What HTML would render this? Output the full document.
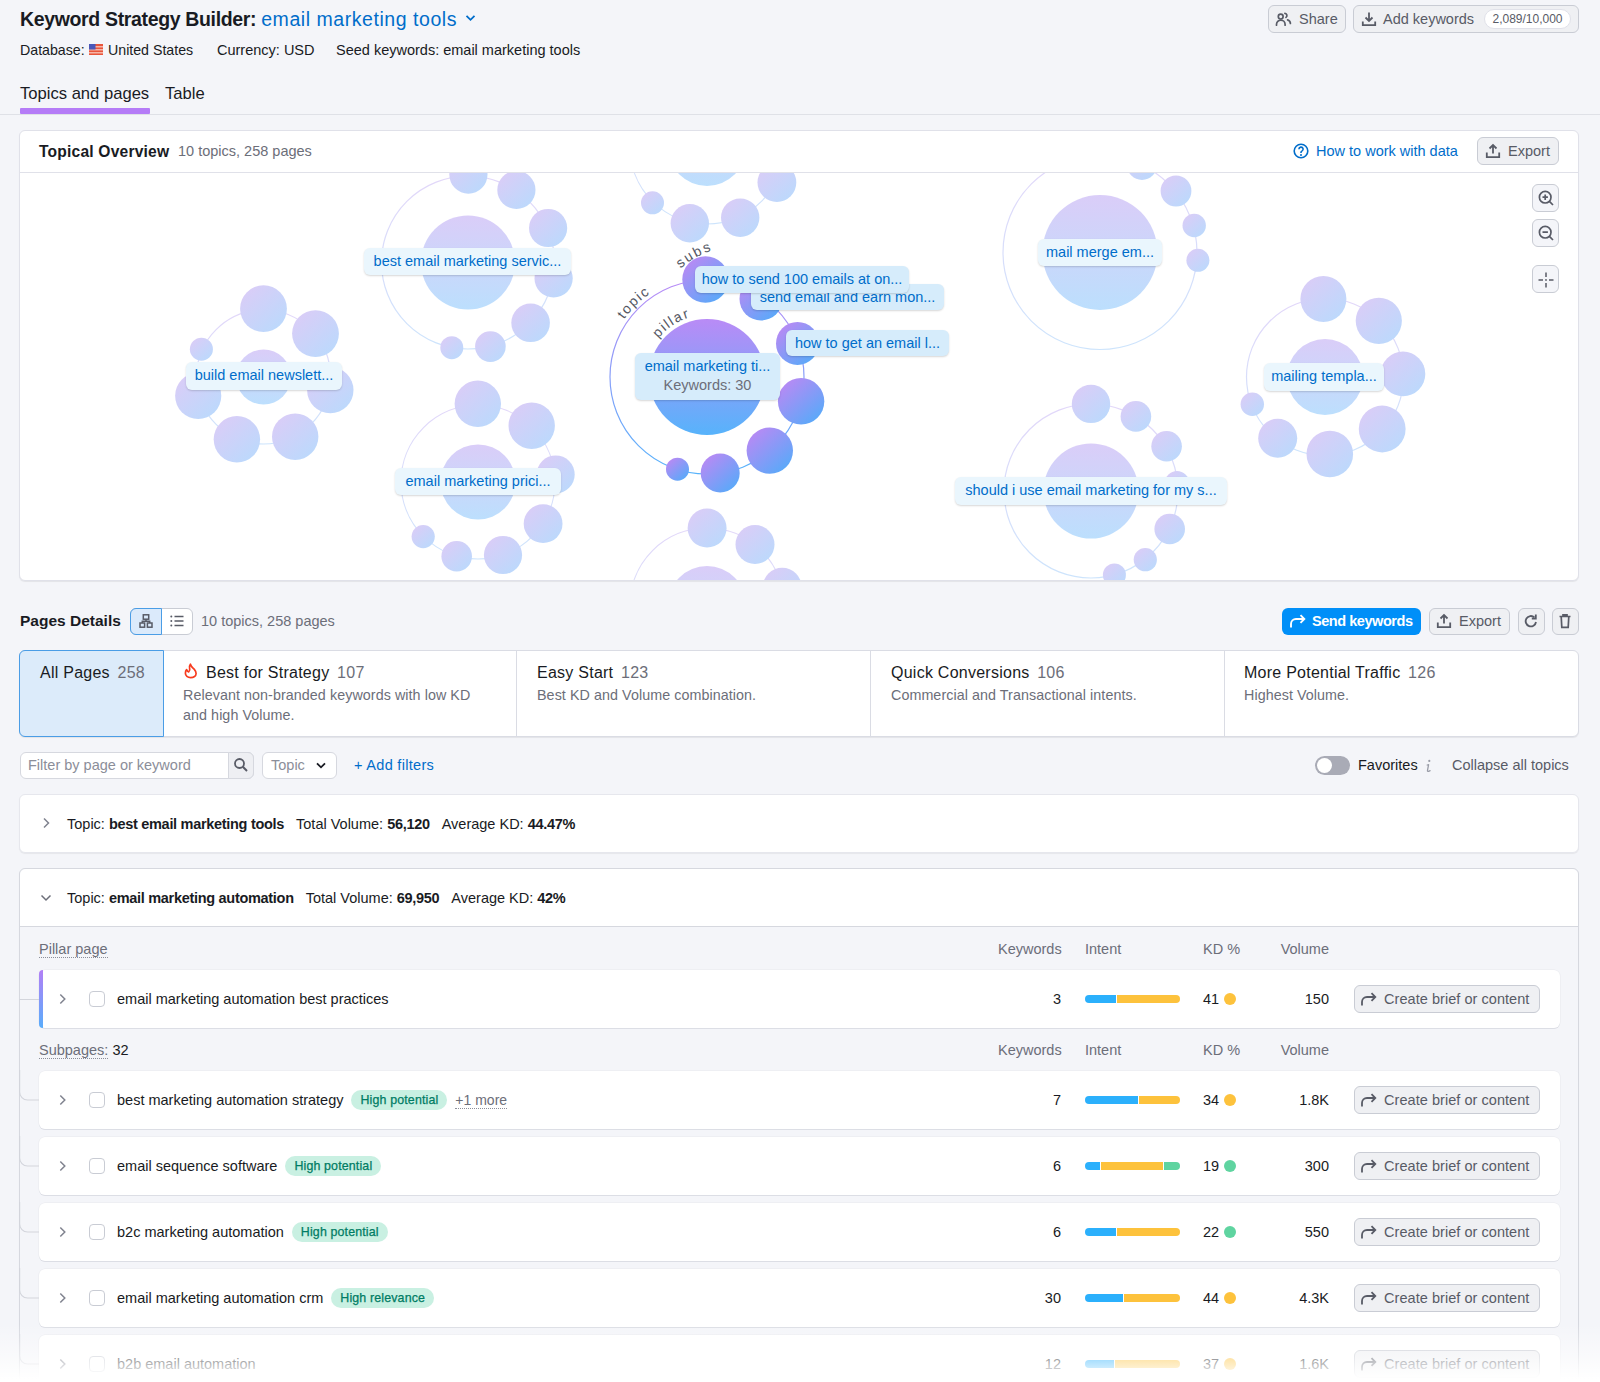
<!DOCTYPE html>
<html><head><meta charset="utf-8">
<style>
*{box-sizing:border-box;margin:0;padding:0}
html,body{width:1600px;height:1382px;overflow:hidden}
body{background:#f4f5f9;font-family:"Liberation Sans",sans-serif;color:#191b23;font-size:14.5px;position:relative}
.a{position:absolute;white-space:nowrap}
.g{color:#6c6e79}
.blue{color:#006dca}
.btn{position:absolute;border:1px solid #c9ccd4;background:#eff0f3;border-radius:6px;color:#585b66}
.card{position:absolute;background:#fff;border:1px solid #e0e1e9;border-radius:6px;box-shadow:0 1px 1px rgba(0,0,0,0.07)}
.sep{position:absolute;height:1px;background:#e0e1e9}
svg{position:absolute;overflow:visible}
.row{position:absolute;left:39px;width:1521px;height:58px;background:#fff;border-radius:6px;box-shadow:0 1px 0 #dcdee5, 0 0 0 0.5px #e8e9ee}
.badge{display:inline-block;margin-left:8px;padding:0 9px;height:20px;line-height:20px;border-radius:10px;background:#c9f0e2;color:#007c64;font-size:12.4px;letter-spacing:0.15px;-webkit-text-stroke:0.25px #007c64;vertical-align:1px}
.dot{border-bottom:1px dotted #8b8e99}
.lbl{position:absolute;white-space:nowrap;border-radius:6px;box-shadow:0 1px 2px rgba(0,0,0,0.16);color:#006dca;font-size:14.5px;line-height:27px;text-align:center}
</style></head><body>

<!-- HEADER -->
<div class="a" style="left:20px;top:7px;font-size:19.5px;line-height:24px;font-weight:700;letter-spacing:-0.35px">Keyword Strategy Builder: <span class="blue" style="font-weight:400;letter-spacing:0.55px">email marketing tools</span></div>
<svg style="left:465px;top:14px" width="11" height="8" viewBox="0 0 11 8"><path d="M1.5 1.8 L5.5 5.8 L9.5 1.8" fill="none" stroke="#006dca" stroke-width="1.8"/></svg>

<div class="a" style="left:20px;top:41px;font-size:14.2px;line-height:18px">Database:</div>
<svg style="left:89px;top:44px" width="14" height="11" viewBox="0 0 14 11"><rect width="14" height="11" fill="#e8553b"/><rect y="2" width="14" height="1.5" fill="#f6b4a6"/><rect y="5" width="14" height="1.5" fill="#f6b4a6"/><rect y="8" width="14" height="1.5" fill="#f6b4a6"/><rect width="6.5" height="5.5" fill="#4a57b8"/></svg>
<div class="a" style="left:108px;top:41px;font-size:14.2px;line-height:18px">United States</div>
<div class="a" style="left:217px;top:41px;font-size:14.5px;line-height:18px">Currency: USD</div>
<div class="a" style="left:336px;top:41px;font-size:14.5px;line-height:18px">Seed keywords: email marketing tools</div>

<!-- top right buttons -->
<div class="btn" style="left:1268px;top:5px;width:78px;height:28px"></div>
<svg style="left:1275px;top:11px" width="18" height="16" viewBox="0 0 18 16"><circle cx="5.7" cy="5.6" r="2.4" fill="none" stroke="#585b66" stroke-width="1.7"/><path d="M1.5 14.2v-.7a4.3 4.3 0 0 1 8.6 0v.7" fill="none" stroke="#585b66" stroke-width="1.7" stroke-linecap="round"/><path d="M9.9 2.4a2.2 2.2 0 0 1 1.1 4M12.6 8.9c1.7.6 2.8 2.1 2.8 3.6" fill="none" stroke="#585b66" stroke-width="1.7" stroke-linecap="round"/></svg>
<div class="a" style="left:1299px;top:10px;font-size:14.5px;line-height:18px;color:#585b66">Share</div>

<div class="btn" style="left:1353px;top:5px;width:226px;height:28px"></div>
<svg style="left:1361px;top:11px" width="16" height="16" viewBox="0 0 16 16"><path d="M8 1.5v8M4.5 6.5 8 10l3.5-3.5M1.8 10.5v3.7h12.4v-3.7" fill="none" stroke="#585b66" stroke-width="1.8"/></svg>
<div class="a" style="left:1383px;top:10px;font-size:14.5px;line-height:18px;color:#585b66">Add keywords</div>
<div class="a" style="left:1484px;top:9px;width:87px;height:20px;background:#fff;border:1px solid #e0e1e9;border-radius:10px;font-size:12px;line-height:18px;text-align:center;color:#585b66">2,089/10,000</div>

<!-- TABS -->
<div class="a" style="left:20px;top:84px;font-size:16.6px;line-height:20px">Topics and pages</div>
<div class="a" style="left:165px;top:84px;font-size:16.6px;line-height:20px">Table</div>
<div class="a" style="left:20px;top:108px;width:130px;height:6px;background:#b57cf7;border-radius:1px"></div>
<div class="sep" style="left:0;top:114px;width:1600px;background:#dfe1e7"></div>

<!-- TOPICAL OVERVIEW CARD -->
<div class="card" style="left:19px;top:130px;width:1560px;height:451px"></div>
<div class="sep" style="left:20px;top:172px;width:1558px"></div>
<div class="a" style="left:39px;top:142px;font-size:15.6px;line-height:20px;font-weight:700;letter-spacing:0.2px">Topical Overview</div>
<div class="a g" style="left:178px;top:142px;font-size:14.5px;line-height:18px">10 topics, 258 pages</div>

<svg style="left:1293px;top:143px" width="16" height="16" viewBox="0 0 16 16"><circle cx="8" cy="8" r="6.8" fill="none" stroke="#006dca" stroke-width="1.6"/><path d="M5.9 6.2a2.1 2.1 0 1 1 3 1.9c-.6.3-.9.7-.9 1.4v.4" fill="none" stroke="#006dca" stroke-width="1.6"/><circle cx="8" cy="11.9" r="1" fill="#006dca"/></svg>
<div class="a blue" style="left:1316px;top:142px;font-size:14.5px;line-height:18px">How to work with data</div>
<div class="btn" style="left:1477px;top:137px;width:82px;height:28px"></div>
<svg style="left:1485px;top:143px" width="16" height="16" viewBox="0 0 16 16"><path d="M8 10.5v-8M4.5 5.5 8 2l3.5 3.5M1.8 9.5v4.7h12.4v-4.7" fill="none" stroke="#585b66" stroke-width="1.8"/></svg>
<div class="a" style="left:1508px;top:142px;font-size:14.5px;line-height:18px;color:#585b66">Export</div>

<!-- zoom controls -->
<div class="btn" style="left:1532px;top:184px;width:27px;height:28px;background:#f4f5f9"></div>
<div class="btn" style="left:1532px;top:219px;width:27px;height:28px;background:#f4f5f9"></div>
<div class="btn" style="left:1532px;top:265px;width:27px;height:28px;background:#f4f5f9"></div>
<svg style="left:1537px;top:189px" width="18" height="18" viewBox="0 0 18 18"><circle cx="8.2" cy="8.2" r="5.8" fill="none" stroke="#585b66" stroke-width="1.7"/><path d="M12.4 12.4 16 16M8.2 5.5v5.4M5.5 8.2h5.4" stroke="#585b66" stroke-width="1.7"/></svg>
<svg style="left:1537px;top:224px" width="18" height="18" viewBox="0 0 18 18"><circle cx="8.2" cy="8.2" r="5.8" fill="none" stroke="#585b66" stroke-width="1.7"/><path d="M12.4 12.4 16 16M5.5 8.2h5.4" stroke="#585b66" stroke-width="1.7"/></svg>
<svg style="left:1537px;top:271px" width="18" height="18" viewBox="0 0 18 18"><path d="M9 1.5v4.5M9 12v4.5M1.5 9H6M12 9h4.5" stroke="#585b66" stroke-width="1.5"/><circle cx="9" cy="9" r="0.9" fill="#585b66"/></svg>

<!--GRAPH-->
<svg style="left:20px;top:173px" width="1558" height="407" viewBox="20 173 1558 407">
<defs>
<clipPath id="clip"><rect x="20" y="173" width="1558" height="407"/></clipPath>
<linearGradient id="gc" x1="0" y1="0" x2="0" y2="1"><stop offset="0" stop-color="#b98bf6"/><stop offset="1" stop-color="#57b3fb"/></linearGradient>
<linearGradient id="gs" x1="0.15" y1="0.1" x2="0.85" y2="0.9"><stop offset="0" stop-color="#b78af4"/><stop offset="1" stop-color="#5aa9f9"/></linearGradient>
<linearGradient id="gr" x1="0" y1="0" x2="0" y2="1"><stop offset="0" stop-color="#b98bf6"/><stop offset="1" stop-color="#57b3fb"/></linearGradient>
<linearGradient id="gci" x1="0" y1="0" x2="0" y2="1"><stop offset="0" stop-color="#dacdf8"/><stop offset="1" stop-color="#bcdffd"/></linearGradient>
<linearGradient id="gsi" x1="0.15" y1="0.1" x2="0.85" y2="0.9"><stop offset="0" stop-color="#d9cdf7"/><stop offset="1" stop-color="#bcd9fc"/></linearGradient>
<linearGradient id="gri" x1="0" y1="0" x2="0" y2="1"><stop offset="0" stop-color="#e2d7f9"/><stop offset="1" stop-color="#cde4fc"/></linearGradient>
<filter id="sh" x="-10%" y="-30%" width="120%" height="160%"><feDropShadow dx="0" dy="1" stdDeviation="1" flood-color="#000" flood-opacity="0.18"/></filter>
</defs>
<g clip-path="url(#clip)">
<circle cx="468" cy="262.5" r="86.5" fill="none" stroke="url(#gri)" stroke-width="1.2"/>
<circle cx="468" cy="262.5" r="47" fill="url(#gci)"/>
<circle cx="468.4" cy="174.6" r="19.1" fill="url(#gsi)"/>
<circle cx="516.4" cy="189.9" r="19.1" fill="url(#gsi)"/>
<circle cx="548.1" cy="228" r="19.1" fill="url(#gsi)"/>
<circle cx="553.6" cy="278.4" r="19.1" fill="url(#gsi)"/>
<circle cx="530.6" cy="322.8" r="19.3" fill="url(#gsi)"/>
<circle cx="490.4" cy="346.6" r="15.3" fill="url(#gsi)"/>
<circle cx="451.8" cy="347.7" r="11.5" fill="url(#gsi)"/>
<circle cx="263.5" cy="377" r="67" fill="none" stroke="url(#gri)" stroke-width="1.2"/>
<circle cx="263.5" cy="377" r="27.5" fill="url(#gci)"/>
<circle cx="263.5" cy="308.7" r="23.4" fill="url(#gsi)"/>
<circle cx="315.5" cy="333.6" r="23.4" fill="url(#gsi)"/>
<circle cx="330.3" cy="390.1" r="23.2" fill="url(#gsi)"/>
<circle cx="295.2" cy="436.7" r="23.2" fill="url(#gsi)"/>
<circle cx="236.9" cy="439.3" r="23.2" fill="url(#gsi)"/>
<circle cx="198.2" cy="395.8" r="23.1" fill="url(#gsi)"/>
<circle cx="201.4" cy="349.2" r="11.5" fill="url(#gsi)"/>
<circle cx="478" cy="482" r="77" fill="none" stroke="url(#gri)" stroke-width="1.2"/>
<circle cx="478" cy="482" r="37.5" fill="url(#gci)"/>
<circle cx="477.8" cy="403.8" r="23.2" fill="url(#gsi)"/>
<circle cx="531.7" cy="425.7" r="23.2" fill="url(#gsi)"/>
<circle cx="555.7" cy="474.4" r="19" fill="url(#gsi)"/>
<circle cx="543.1" cy="523.7" r="19.4" fill="url(#gsi)"/>
<circle cx="503" cy="555" r="19.1" fill="url(#gsi)"/>
<circle cx="456.7" cy="556.3" r="15.3" fill="url(#gsi)"/>
<circle cx="423.2" cy="536.6" r="11.6" fill="url(#gsi)"/>
<circle cx="707" cy="147" r="77" fill="none" stroke="url(#gri)" stroke-width="1.2"/>
<circle cx="707" cy="147" r="39" fill="url(#gci)"/>
<circle cx="652.5" cy="202.8" r="11.5" fill="url(#gsi)"/>
<circle cx="689.8" cy="223.25" r="19.2" fill="url(#gsi)"/>
<circle cx="740.2" cy="217.7" r="19.2" fill="url(#gsi)"/>
<circle cx="776.9" cy="182.5" r="19.4" fill="url(#gsi)"/>
<circle cx="707" cy="605" r="77" fill="none" stroke="url(#gri)" stroke-width="1.2"/>
<circle cx="707" cy="605" r="39" fill="url(#gci)"/>
<circle cx="707.1" cy="528.1" r="19.5" fill="url(#gsi)"/>
<circle cx="755" cy="544.5" r="19.5" fill="url(#gsi)"/>
<circle cx="782.2" cy="587.2" r="19.5" fill="url(#gsi)"/>
<circle cx="1100" cy="252.5" r="97" fill="none" stroke="url(#gri)" stroke-width="1.2"/>
<circle cx="1100" cy="252.5" r="57.5" fill="url(#gci)"/>
<circle cx="1142" cy="165" r="15" fill="url(#gsi)"/>
<circle cx="1176" cy="191" r="15.4" fill="url(#gsi)"/>
<circle cx="1194.2" cy="225.5" r="11.7" fill="url(#gsi)"/>
<circle cx="1197.9" cy="260.3" r="11.5" fill="url(#gsi)"/>
<circle cx="1325" cy="377" r="78.5" fill="none" stroke="url(#gri)" stroke-width="1.2"/>
<circle cx="1325" cy="377" r="38" fill="url(#gci)"/>
<circle cx="1323.4" cy="298.9" r="23" fill="url(#gsi)"/>
<circle cx="1378.8" cy="320.8" r="23.1" fill="url(#gsi)"/>
<circle cx="1403" cy="373.9" r="22.3" fill="url(#gsi)"/>
<circle cx="1382.2" cy="429" r="23.4" fill="url(#gsi)"/>
<circle cx="1329.8" cy="454" r="23.3" fill="url(#gsi)"/>
<circle cx="1277.7" cy="438.3" r="19.5" fill="url(#gsi)"/>
<circle cx="1252.3" cy="404.2" r="11.7" fill="url(#gsi)"/>
<circle cx="1091" cy="491" r="87" fill="none" stroke="url(#gri)" stroke-width="1.2"/>
<circle cx="1091" cy="491" r="47.5" fill="url(#gci)"/>
<circle cx="1091" cy="403.9" r="19.2" fill="url(#gsi)"/>
<circle cx="1135.9" cy="416.4" r="15.3" fill="url(#gsi)"/>
<circle cx="1166.6" cy="446.25" r="15.3" fill="url(#gsi)"/>
<circle cx="1177" cy="483" r="12" fill="url(#gsi)"/>
<circle cx="1169.7" cy="529" r="15.3" fill="url(#gsi)"/>
<circle cx="1145.3" cy="559.7" r="11.6" fill="url(#gsi)"/>
<circle cx="1114.4" cy="575" r="11.5" fill="url(#gsi)"/>
<circle cx="707" cy="377" r="97" fill="none" stroke="url(#gr)" stroke-width="1.2"/>
<circle cx="707" cy="377" r="58" fill="url(#gc)"/>
<circle cx="705.5" cy="279.5" r="23.2" fill="url(#gs)"/>
<circle cx="761" cy="299" r="21.5" fill="url(#gs)"/>
<circle cx="797.5" cy="343.4" r="21.5" fill="url(#gs)"/>
<circle cx="801.1" cy="401.3" r="23.2" fill="url(#gs)"/>
<circle cx="769.8" cy="450.6" r="23.2" fill="url(#gs)"/>
<circle cx="720.2" cy="473" r="19.5" fill="url(#gs)"/>
<circle cx="677.5" cy="469.2" r="11.5" fill="url(#gs)"/>
<path id="pt" d="M 707 478 A 101 101 0 0 1 707 276" fill="none"/>
<path id="pp" d="M 707 439 A 62 62 0 0 1 707 315" fill="none"/>
<path id="ps" d="M 651 335 A 89 89 0 0 1 784.5 257.9" fill="none"/>
<text font-family="Liberation Sans" font-size="14" letter-spacing="1.7" fill="#555864"><textPath href="#pt" startOffset="69.3%">topic</textPath></text>
<text font-family="Liberation Sans" font-size="14" letter-spacing="1.6" fill="#555864"><textPath href="#pp" startOffset="71.3%">pillar</textPath></text>
<text font-family="Liberation Sans" font-size="14" letter-spacing="2.1" fill="#555864"><textPath href="#ps" startOffset="40.1%">subs</textPath></text>
</g></svg>
<div class="lbl" style="left:364px;top:248px;width:207px;height:27px;background:#eaf6fd">best email marketing servic...</div>
<div class="lbl" style="left:186px;top:362px;width:156px;height:28px;background:#eaf6fd">build email newslett...</div>
<div class="lbl" style="left:395px;top:468px;width:166px;height:27px;background:#eaf6fd">email marketing prici...</div>
<div class="lbl" style="left:1038px;top:239px;width:124px;height:27px;background:#eaf6fd">mail merge em...</div>
<div class="lbl" style="left:1264px;top:363px;width:120px;height:28px;background:#eaf6fd">mailing templa...</div>
<div class="lbl" style="left:955px;top:477px;width:272px;height:28px;background:#eaf6fd">should i use email marketing for my s...</div>
<div class="lbl" style="left:751px;top:284px;width:193px;height:26px;background:#d6ecfb">send email and earn mon...</div>
<div class="lbl" style="left:695px;top:266px;width:214px;height:27px;background:#d6ecfb">how to send 100 emails at on...</div>
<div class="lbl" style="left:786px;top:330px;width:163px;height:26px;background:#d6ecfb">how to get an email l...</div>
<div class="lbl" style="left:635px;top:353px;width:145px;height:47px;background:#d6ecfb;line-height:19px;padding-top:4px">email marketing ti...<br><span style="color:#6c6e79">Keywords: 30</span></div>
<!--/GRAPH-->

<!--PAGES-->
<!-- PAGES DETAILS -->
<div class="a" style="left:20px;top:611px;font-size:15.5px;line-height:20px;font-weight:700">Pages Details</div>
<div class="a" style="left:130px;top:608px;width:63px;height:27px;border:1px solid #c9ccd4;border-radius:6px;background:#fff"></div>
<div class="a" style="left:130px;top:608px;width:32px;height:27px;border:1px solid #4a9de6;border-radius:6px 0 0 6px;background:#dbeafb"></div>
<svg style="left:138px;top:613px" width="16" height="16" viewBox="0 0 16 16"><rect x="5.3" y="1.8" width="5.4" height="4.4" fill="none" stroke="#585b66" stroke-width="1.5"/><rect x="2" y="10" width="4.6" height="4.2" fill="none" stroke="#585b66" stroke-width="1.5"/><rect x="9.4" y="10" width="4.6" height="4.2" fill="none" stroke="#585b66" stroke-width="1.5"/><path d="M8 6.2v2H4.3V10M8 8.2h3.7V10" fill="none" stroke="#585b66" stroke-width="1.5"/></svg>
<svg style="left:169px;top:613px" width="16" height="16" viewBox="0 0 16 16"><path d="M5.5 3.5h9M5.5 8h9M5.5 12.5h9" stroke="#585b66" stroke-width="1.5"/><circle cx="2.3" cy="3.5" r="1" fill="#585b66"/><circle cx="2.3" cy="8" r="1" fill="#585b66"/><circle cx="2.3" cy="12.5" r="1" fill="#585b66"/></svg>
<div class="a g" style="left:201px;top:612px;font-size:14.5px;line-height:18px">10 topics, 258 pages</div>

<div class="a" style="left:1282px;top:608px;width:139px;height:27px;background:#008ff8;border-radius:6px"></div>
<svg style="left:1289px;top:613px" width="17" height="16" viewBox="0 0 17 16"><path d="M2 14.5V11a5 5 0 0 1 5-5h8.2M11.5 2.2l3.8 3.8-3.8 3.8" fill="none" stroke="#fff" stroke-width="1.9"/></svg>
<div class="a" style="left:1312px;top:612px;font-size:14.5px;line-height:18px;color:#fff;font-weight:700;letter-spacing:-0.45px">Send keywords</div>
<div class="btn" style="left:1429px;top:608px;width:81px;height:27px"></div>
<svg style="left:1436px;top:613px" width="16" height="16" viewBox="0 0 16 16"><path d="M8 10.5v-8M4.5 5.5 8 2l3.5 3.5M1.8 9.5v4.7h12.4v-4.7" fill="none" stroke="#585b66" stroke-width="1.8"/></svg>
<div class="a" style="left:1459px;top:612px;font-size:14.5px;line-height:18px;color:#585b66">Export</div>
<div class="btn" style="left:1518px;top:608px;width:27px;height:27px"></div>
<svg style="left:1523px;top:613px" width="16" height="16" viewBox="0 0 16 16"><path d="M13 9a5.2 5.2 0 1 1-1.6-4.6" fill="none" stroke="#585b66" stroke-width="1.8"/><path d="M12.8 1.5v4h-4" fill="none" stroke="#585b66" stroke-width="1.8"/></svg>
<div class="btn" style="left:1552px;top:608px;width:27px;height:27px"></div>
<svg style="left:1557px;top:613px" width="16" height="16" viewBox="0 0 16 16"><path d="M2.5 3.5h11M6 3.3V1.8h4v1.5M4.2 3.5l.6 10.8h6.4l.6-10.8" fill="none" stroke="#585b66" stroke-width="1.7"/></svg>

<!-- tiles -->
<div class="card" style="left:19px;top:650px;width:1560px;height:87px;border-color:#dadce4"></div>
<div class="a" style="left:19px;top:650px;width:145px;height:87px;background:#dcebfa;border:1px solid #4a9de6;border-radius:6px 0 0 6px"></div>
<div class="a" style="left:516px;top:651px;width:1px;height:85px;background:#dadce4"></div>
<div class="a" style="left:870px;top:651px;width:1px;height:85px;background:#dadce4"></div>
<div class="a" style="left:1224px;top:651px;width:1px;height:85px;background:#dadce4"></div>

<div class="a" style="left:40px;top:663px;font-size:16px;line-height:20px;letter-spacing:0.25px">All Pages <span class="g" style="margin-left:3px">258</span></div>
<svg style="left:183px;top:663px" width="16" height="16" viewBox="0 0 16 16"><path d="M7.4 1.2C8 3.6 9.8 4.8 11.3 6.4 12.6 7.9 13.1 9.3 13.1 10.6 13.1 13 10.7 14.6 7.6 14.6 4.6 14.6 2.4 12.8 2.4 10.3 2.4 8.9 2.8 7.5 3.6 6.6 4.1 7.7 4.8 8.5 5.7 8.9 6.8 8 7.2 7 6.6 5.4 6.1 4.1 6.4 2.6 7.4 1.2Z" fill="none" stroke="#f73b1e" stroke-width="1.7" stroke-linejoin="round"/></svg>
<div class="a" style="left:206px;top:663px;font-size:16px;line-height:20px;letter-spacing:0.25px">Best for Strategy <span class="g" style="margin-left:3px">107</span></div>
<div class="a g" style="left:183px;top:686px;font-size:14.3px;line-height:19.5px;letter-spacing:0.07px;white-space:normal;width:320px">Relevant non-branded keywords with low KD<br>and high Volume.</div>
<div class="a" style="left:537px;top:663px;font-size:16px;line-height:20px;letter-spacing:0.25px">Easy Start <span class="g" style="margin-left:3px">123</span></div>
<div class="a g" style="left:537px;top:686px;font-size:14.3px;line-height:19.5px;letter-spacing:0.07px">Best KD and Volume combination.</div>
<div class="a" style="left:891px;top:663px;font-size:16px;line-height:20px;letter-spacing:0.25px">Quick Conversions <span class="g" style="margin-left:3px">106</span></div>
<div class="a g" style="left:891px;top:686px;font-size:14.3px;line-height:19.5px;letter-spacing:0.07px">Commercial and Transactional intents.</div>
<div class="a" style="left:1244px;top:663px;font-size:16px;line-height:20px;letter-spacing:0.25px">More Potential Traffic <span class="g" style="margin-left:3px">126</span></div>
<div class="a g" style="left:1244px;top:686px;font-size:14.3px;line-height:19.5px;letter-spacing:0.07px">Highest Volume.</div>

<!-- filters -->
<div class="a" style="left:20px;top:752px;width:234px;height:27px;border:1px solid #d6d8df;border-radius:6px;background:#fff"></div>
<div class="a" style="left:228px;top:752px;width:26px;height:27px;border:1px solid #d6d8df;border-radius:0 6px 6px 0;background:#eeeff3"></div>
<svg style="left:233px;top:757px" width="16" height="16" viewBox="0 0 16 16"><circle cx="6.5" cy="6.5" r="4.5" fill="none" stroke="#585b66" stroke-width="1.8"/><path d="M9.8 9.8 14 14" stroke="#585b66" stroke-width="2"/></svg>
<div class="a" style="left:28px;top:756px;font-size:14.5px;line-height:18px;color:#8b8e99">Filter by page or keyword</div>
<div class="a" style="left:262px;top:752px;width:75px;height:27px;border:1px solid #d6d8df;border-radius:6px;background:#fff"></div>
<div class="a" style="left:271px;top:756px;font-size:14.5px;line-height:18px;color:#8b8e99">Topic</div>
<svg style="left:315px;top:761px" width="12" height="9" viewBox="0 0 12 9"><path d="M2 2.3 6 6.3 10 2.3" fill="none" stroke="#191b23" stroke-width="1.8"/></svg>
<div class="a blue" style="left:354px;top:756px;font-size:14.5px;line-height:18px;letter-spacing:0.3px">+ Add filters</div>

<div class="a" style="left:1315px;top:756px;width:35px;height:19px;background:#a9abb6;border-radius:10px"></div>
<div class="a" style="left:1317px;top:758px;width:15px;height:15px;background:#fff;border-radius:50%"></div>
<div class="a" style="left:1358px;top:756px;font-size:14.5px;line-height:18px">Favorites</div>
<svg style="left:1423px;top:758px" width="11" height="16" viewBox="0 0 11 16"><circle cx="6.3" cy="2.9" r="1.1" fill="#9a9da8"/><path d="M4.2 7 5.6 6.6 4.5 12.3c-.2.9.4 1.3 1.2 1l1.4-.6" fill="none" stroke="#9a9da8" stroke-width="1.3" stroke-linecap="round" stroke-linejoin="round"/></svg>
<div class="a" style="left:1452px;top:756px;font-size:14.5px;line-height:18px;color:#585b66">Collapse all topics</div>

<!-- topic 1 -->
<div class="card" style="left:19px;top:794px;width:1560px;height:59px;border-color:#e6e7ed;box-shadow:0 1px 1px rgba(0,0,0,0.06)"></div>
<svg style="left:40px;top:816px" width="12" height="14" viewBox="0 0 12 14"><path d="M4 2.5 8.5 7 4 11.5" fill="none" stroke="#80838f" stroke-width="1.5"/></svg>
<div class="a" style="left:67px;top:815px;font-size:14.5px;line-height:18px">Topic: <b style="letter-spacing:-0.3px">best email marketing tools</b><span style="margin-left:12px">Total Volume: <b style="letter-spacing:-0.3px">56,120</b></span><span style="margin-left:12px">Average KD: <b style="letter-spacing:-0.3px">44.47%</b></span></div>

<!-- topic 2 -->
<div class="card" style="left:19px;top:868px;width:1560px;height:600px;background:#f4f5f9;border-color:#d6d8df"></div>
<div class="a" style="left:20px;top:869px;width:1558px;height:58px;background:#fff;border-radius:6px 6px 0 0;border-bottom:1px solid #d6d8df"></div>
<svg style="left:39px;top:892px" width="14" height="12" viewBox="0 0 14 12"><path d="M2.5 3.5 7 8 11.5 3.5" fill="none" stroke="#6c6e79" stroke-width="1.5"/></svg>
<div class="a" style="left:67px;top:889px;font-size:14.5px;line-height:18px">Topic: <b style="letter-spacing:-0.3px">email marketing automation</b><span style="margin-left:12px">Total Volume: <b style="letter-spacing:-0.3px">69,950</b></span><span style="margin-left:12px">Average KD: <b style="letter-spacing:-0.3px">42%</b></span></div>
<!--/PAGES-->
<!--ROWS-->
<div class="a g" style="left:39px;top:940px;font-size:14.5px;line-height:18px"><span class="dot">Pillar page</span></div>
<div class="a g" style="left:998px;top:940px;width:63px;text-align:right;font-size:14.5px;line-height:18px">Keywords</div>
<div class="a g" style="left:1085px;top:940px;font-size:14.5px;line-height:18px">Intent</div>
<div class="a g" style="left:1203px;top:940px;font-size:14.5px;line-height:18px">KD %</div>
<div class="a g" style="left:1270px;top:940px;width:59px;text-align:right;font-size:14.5px;line-height:18px">Volume</div>
<div class="row" style="top:970px"></div>
<div class="a" style="left:39px;top:970px;width:4px;height:58px;background:linear-gradient(#b27ff6,#59adfb);border-radius:4px 0 0 4px"></div>
<div class="a" style="left:19px;top:999px;width:20px;height:1px;background:#d3d5dc"></div>
<svg style="left:56px;top:992px" width="12" height="14" viewBox="0 0 12 14"><path d="M4.3 2.5 8.8 7 4.3 11.5" fill="none" stroke="#80838f" stroke-width="1.5"/></svg>
<div class="a" style="left:89px;top:991px;width:16px;height:16px;border:1px solid #c9ccd4;border-radius:4px;background:#fff"></div>
<div class="a" style="left:117px;top:989px;font-size:14.5px;line-height:20px">email marketing automation best practices</div>
<div class="a" style="left:1000px;top:989px;width:61px;text-align:right;font-size:14.5px;line-height:20px">3</div>
<div class="a" style="left:1085px;top:995px;width:95px;height:8px;border-radius:4px;overflow:hidden;background:#fff"><div style="position:absolute;left:0px;width:31px;top:0;height:8px;background:#2bb0fc"></div><div style="position:absolute;left:32px;width:63px;top:0;height:8px;background:#fdc23c"></div></div>
<div class="a" style="left:1203px;top:989px;font-size:14.5px;line-height:20px">41<span style="display:inline-block;width:12px;height:12px;border-radius:50%;background:#fdc23c;margin-left:5px;vertical-align:-1px"></span></div>
<div class="a" style="left:1260px;top:989px;width:69px;text-align:right;font-size:14.5px;line-height:20px">150</div>
<div class="btn" style="left:1354px;top:985px;width:186px;height:28px"></div>
<svg style="left:1360px;top:991px" width="17" height="16" viewBox="0 0 17 16"><path d="M2 14.5V11a5 5 0 0 1 5-5h8.2M11.5 2.2l3.8 3.8-3.8 3.8" fill="none" stroke="#585b66" stroke-width="1.8"/></svg>
<div class="a" style="left:1384px;top:989px;font-size:14.5px;line-height:20px;color:#585b66;letter-spacing:0.05px">Create brief or content</div>
<div class="a g" style="left:39px;top:1041px;font-size:14.5px;line-height:18px"><span class="dot">Subpages:</span> <span style="color:#191b23">32</span></div>
<div class="a g" style="left:998px;top:1041px;width:63px;text-align:right;font-size:14.5px;line-height:18px">Keywords</div>
<div class="a g" style="left:1085px;top:1041px;font-size:14.5px;line-height:18px">Intent</div>
<div class="a g" style="left:1203px;top:1041px;font-size:14.5px;line-height:18px">KD %</div>
<div class="a g" style="left:1270px;top:1041px;width:59px;text-align:right;font-size:14.5px;line-height:18px">Volume</div>
<div class="row" style="top:1071px"></div>
<svg style="left:19px;top:1070px" width="21" height="31" viewBox="0 0 21 31"><path d="M0.6 0V22a8 8 0 0 0 8 8H20" fill="none" stroke="#d3d5dc" stroke-width="1.2"/></svg>
<svg style="left:56px;top:1093px" width="12" height="14" viewBox="0 0 12 14"><path d="M4.3 2.5 8.8 7 4.3 11.5" fill="none" stroke="#80838f" stroke-width="1.5"/></svg>
<div class="a" style="left:89px;top:1092px;width:16px;height:16px;border:1px solid #c9ccd4;border-radius:4px;background:#fff"></div>
<div class="a" style="left:117px;top:1090px;font-size:14.5px;line-height:20px">best marketing automation strategy<span class="badge">High potential</span><span class="dot g" style="margin-left:8px;font-size:14px">+1 more</span></div>
<div class="a" style="left:1000px;top:1090px;width:61px;text-align:right;font-size:14.5px;line-height:20px">7</div>
<div class="a" style="left:1085px;top:1096px;width:95px;height:8px;border-radius:4px;overflow:hidden;background:#fff"><div style="position:absolute;left:0px;width:53px;top:0;height:8px;background:#2bb0fc"></div><div style="position:absolute;left:54px;width:41px;top:0;height:8px;background:#fdc23c"></div></div>
<div class="a" style="left:1203px;top:1090px;font-size:14.5px;line-height:20px">34<span style="display:inline-block;width:12px;height:12px;border-radius:50%;background:#fdc23c;margin-left:5px;vertical-align:-1px"></span></div>
<div class="a" style="left:1260px;top:1090px;width:69px;text-align:right;font-size:14.5px;line-height:20px">1.8K</div>
<div class="btn" style="left:1354px;top:1086px;width:186px;height:28px"></div>
<svg style="left:1360px;top:1092px" width="17" height="16" viewBox="0 0 17 16"><path d="M2 14.5V11a5 5 0 0 1 5-5h8.2M11.5 2.2l3.8 3.8-3.8 3.8" fill="none" stroke="#585b66" stroke-width="1.8"/></svg>
<div class="a" style="left:1384px;top:1090px;font-size:14.5px;line-height:20px;color:#585b66;letter-spacing:0.05px">Create brief or content</div>
<div class="row" style="top:1137px"></div>
<svg style="left:19px;top:1136px" width="21" height="31" viewBox="0 0 21 31"><path d="M0.6 0V22a8 8 0 0 0 8 8H20" fill="none" stroke="#d3d5dc" stroke-width="1.2"/></svg>
<svg style="left:56px;top:1159px" width="12" height="14" viewBox="0 0 12 14"><path d="M4.3 2.5 8.8 7 4.3 11.5" fill="none" stroke="#80838f" stroke-width="1.5"/></svg>
<div class="a" style="left:89px;top:1158px;width:16px;height:16px;border:1px solid #c9ccd4;border-radius:4px;background:#fff"></div>
<div class="a" style="left:117px;top:1156px;font-size:14.5px;line-height:20px">email sequence software<span class="badge">High potential</span></div>
<div class="a" style="left:1000px;top:1156px;width:61px;text-align:right;font-size:14.5px;line-height:20px">6</div>
<div class="a" style="left:1085px;top:1162px;width:95px;height:8px;border-radius:4px;overflow:hidden;background:#fff"><div style="position:absolute;left:0px;width:15px;top:0;height:8px;background:#2bb0fc"></div><div style="position:absolute;left:16px;width:62px;top:0;height:8px;background:#fdc23c"></div><div style="position:absolute;left:79px;width:16px;top:0;height:8px;background:#5fd4a0"></div></div>
<div class="a" style="left:1203px;top:1156px;font-size:14.5px;line-height:20px">19<span style="display:inline-block;width:12px;height:12px;border-radius:50%;background:#5fd4a0;margin-left:5px;vertical-align:-1px"></span></div>
<div class="a" style="left:1260px;top:1156px;width:69px;text-align:right;font-size:14.5px;line-height:20px">300</div>
<div class="btn" style="left:1354px;top:1152px;width:186px;height:28px"></div>
<svg style="left:1360px;top:1158px" width="17" height="16" viewBox="0 0 17 16"><path d="M2 14.5V11a5 5 0 0 1 5-5h8.2M11.5 2.2l3.8 3.8-3.8 3.8" fill="none" stroke="#585b66" stroke-width="1.8"/></svg>
<div class="a" style="left:1384px;top:1156px;font-size:14.5px;line-height:20px;color:#585b66;letter-spacing:0.05px">Create brief or content</div>
<div class="row" style="top:1203px"></div>
<svg style="left:19px;top:1202px" width="21" height="31" viewBox="0 0 21 31"><path d="M0.6 0V22a8 8 0 0 0 8 8H20" fill="none" stroke="#d3d5dc" stroke-width="1.2"/></svg>
<svg style="left:56px;top:1225px" width="12" height="14" viewBox="0 0 12 14"><path d="M4.3 2.5 8.8 7 4.3 11.5" fill="none" stroke="#80838f" stroke-width="1.5"/></svg>
<div class="a" style="left:89px;top:1224px;width:16px;height:16px;border:1px solid #c9ccd4;border-radius:4px;background:#fff"></div>
<div class="a" style="left:117px;top:1222px;font-size:14.5px;line-height:20px">b2c marketing automation<span class="badge">High potential</span></div>
<div class="a" style="left:1000px;top:1222px;width:61px;text-align:right;font-size:14.5px;line-height:20px">6</div>
<div class="a" style="left:1085px;top:1228px;width:95px;height:8px;border-radius:4px;overflow:hidden;background:#fff"><div style="position:absolute;left:0px;width:31px;top:0;height:8px;background:#2bb0fc"></div><div style="position:absolute;left:32px;width:63px;top:0;height:8px;background:#fdc23c"></div></div>
<div class="a" style="left:1203px;top:1222px;font-size:14.5px;line-height:20px">22<span style="display:inline-block;width:12px;height:12px;border-radius:50%;background:#5fd4a0;margin-left:5px;vertical-align:-1px"></span></div>
<div class="a" style="left:1260px;top:1222px;width:69px;text-align:right;font-size:14.5px;line-height:20px">550</div>
<div class="btn" style="left:1354px;top:1218px;width:186px;height:28px"></div>
<svg style="left:1360px;top:1224px" width="17" height="16" viewBox="0 0 17 16"><path d="M2 14.5V11a5 5 0 0 1 5-5h8.2M11.5 2.2l3.8 3.8-3.8 3.8" fill="none" stroke="#585b66" stroke-width="1.8"/></svg>
<div class="a" style="left:1384px;top:1222px;font-size:14.5px;line-height:20px;color:#585b66;letter-spacing:0.05px">Create brief or content</div>
<div class="row" style="top:1269px"></div>
<svg style="left:19px;top:1268px" width="21" height="31" viewBox="0 0 21 31"><path d="M0.6 0V22a8 8 0 0 0 8 8H20" fill="none" stroke="#d3d5dc" stroke-width="1.2"/></svg>
<svg style="left:56px;top:1291px" width="12" height="14" viewBox="0 0 12 14"><path d="M4.3 2.5 8.8 7 4.3 11.5" fill="none" stroke="#80838f" stroke-width="1.5"/></svg>
<div class="a" style="left:89px;top:1290px;width:16px;height:16px;border:1px solid #c9ccd4;border-radius:4px;background:#fff"></div>
<div class="a" style="left:117px;top:1288px;font-size:14.5px;line-height:20px">email marketing automation crm<span class="badge">High relevance</span></div>
<div class="a" style="left:1000px;top:1288px;width:61px;text-align:right;font-size:14.5px;line-height:20px">30</div>
<div class="a" style="left:1085px;top:1294px;width:95px;height:8px;border-radius:4px;overflow:hidden;background:#fff"><div style="position:absolute;left:0px;width:38px;top:0;height:8px;background:#2bb0fc"></div><div style="position:absolute;left:39px;width:56px;top:0;height:8px;background:#fdc23c"></div></div>
<div class="a" style="left:1203px;top:1288px;font-size:14.5px;line-height:20px">44<span style="display:inline-block;width:12px;height:12px;border-radius:50%;background:#fdc23c;margin-left:5px;vertical-align:-1px"></span></div>
<div class="a" style="left:1260px;top:1288px;width:69px;text-align:right;font-size:14.5px;line-height:20px">4.3K</div>
<div class="btn" style="left:1354px;top:1284px;width:186px;height:28px"></div>
<svg style="left:1360px;top:1290px" width="17" height="16" viewBox="0 0 17 16"><path d="M2 14.5V11a5 5 0 0 1 5-5h8.2M11.5 2.2l3.8 3.8-3.8 3.8" fill="none" stroke="#585b66" stroke-width="1.8"/></svg>
<div class="a" style="left:1384px;top:1288px;font-size:14.5px;line-height:20px;color:#585b66;letter-spacing:0.05px">Create brief or content</div>
<div class="row" style="top:1335px"></div>
<svg style="left:19px;top:1334px" width="21" height="31" viewBox="0 0 21 31"><path d="M0.6 0V22a8 8 0 0 0 8 8H20" fill="none" stroke="#d3d5dc" stroke-width="1.2"/></svg>
<svg style="left:56px;top:1357px" width="12" height="14" viewBox="0 0 12 14"><path d="M4.3 2.5 8.8 7 4.3 11.5" fill="none" stroke="#80838f" stroke-width="1.5"/></svg>
<div class="a" style="left:89px;top:1356px;width:16px;height:16px;border:1px solid #c9ccd4;border-radius:4px;background:#fff"></div>
<div class="a" style="left:117px;top:1354px;font-size:14.5px;line-height:20px">b2b email automation</div>
<div class="a" style="left:1000px;top:1354px;width:61px;text-align:right;font-size:14.5px;line-height:20px">12</div>
<div class="a" style="left:1085px;top:1360px;width:95px;height:8px;border-radius:4px;overflow:hidden;background:#fff"><div style="position:absolute;left:0px;width:29px;top:0;height:8px;background:#2bb0fc"></div><div style="position:absolute;left:30px;width:65px;top:0;height:8px;background:#fdc23c"></div></div>
<div class="a" style="left:1203px;top:1354px;font-size:14.5px;line-height:20px">37<span style="display:inline-block;width:12px;height:12px;border-radius:50%;background:#fdc23c;margin-left:5px;vertical-align:-1px"></span></div>
<div class="a" style="left:1260px;top:1354px;width:69px;text-align:right;font-size:14.5px;line-height:20px">1.6K</div>
<div class="btn" style="left:1354px;top:1350px;width:186px;height:28px"></div>
<svg style="left:1360px;top:1356px" width="17" height="16" viewBox="0 0 17 16"><path d="M2 14.5V11a5 5 0 0 1 5-5h8.2M11.5 2.2l3.8 3.8-3.8 3.8" fill="none" stroke="#585b66" stroke-width="1.8"/></svg>
<div class="a" style="left:1384px;top:1354px;font-size:14.5px;line-height:20px;color:#585b66;letter-spacing:0.05px">Create brief or content</div>
<div class="a" style="left:0;top:1324px;width:1600px;height:58px;background:linear-gradient(rgba(255,255,255,0),rgba(255,255,255,0.5) 55%,#fff 95%)"></div>
<!--/ROWS-->

</body></html>
